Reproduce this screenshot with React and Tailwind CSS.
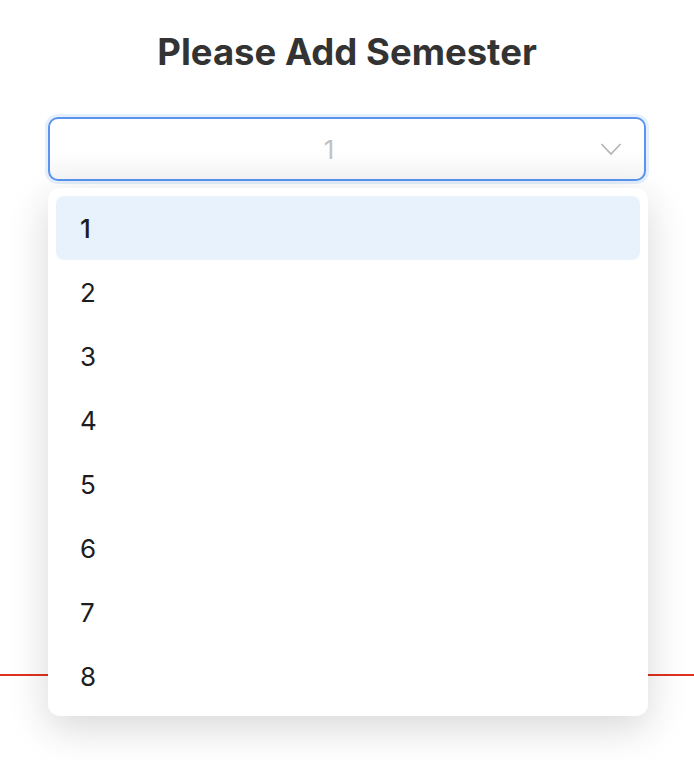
import React from "react";

export default function App() {
  const items = [1, 2, 3, 4, 5, 6, 7, 8];
  return (
    <div className="relative min-h-[760px] w-[694px] bg-white overflow-hidden" style={{ fontFamily: "Inter, 'Noto Sans', sans-serif" }}>
      <div className="flex flex-col px-12">
        <h1 className="mt-[30px] text-center text-[36.5px] leading-[44px] font-bold text-[#333333]">
          Please Add Semester
        </h1>
        <div className="mt-[43px] relative h-[64px] rounded-[10px] border-2 border-[#5a93f2] ring-[3px] ring-[#e6effc] bg-gradient-to-b from-white via-white to-[#f6f6f6] flex items-center justify-center pr-[36px]">
          <span className="text-[26px] text-[#c2c2c2]">1</span>
          <svg className="absolute right-[22px] top-1/2 -translate-y-1/2" width="22" height="14" viewBox="0 0 22 14" fill="none">
            <path d="M1.5 2 L11 12 L20.5 2" stroke="#b3b3b3" strokeWidth="1.6" />
          </svg>
        </div>
      </div>
      <div className="mt-[493px] h-[2px] bg-[#e0301e]" />
      <div className="absolute left-12 top-[188px] w-[600px] rounded-[12px] bg-white p-2 shadow-[0_12px_40px_rgba(0,0,0,0.16)]">
        {items.map((n) => (
          <div
            key={n}
            className={
              n === 1
                ? "h-[64px] rounded-[8px] bg-[#e8f2fd] flex items-center pl-[24px] text-[26px] font-medium text-[#1d1d1f]"
                : "h-[64px] rounded-[8px] flex items-center pl-[24px] text-[26px] text-[#1d1d1f]"
            }
          >
            {n}
          </div>
        ))}
      </div>
    </div>
  );
}
